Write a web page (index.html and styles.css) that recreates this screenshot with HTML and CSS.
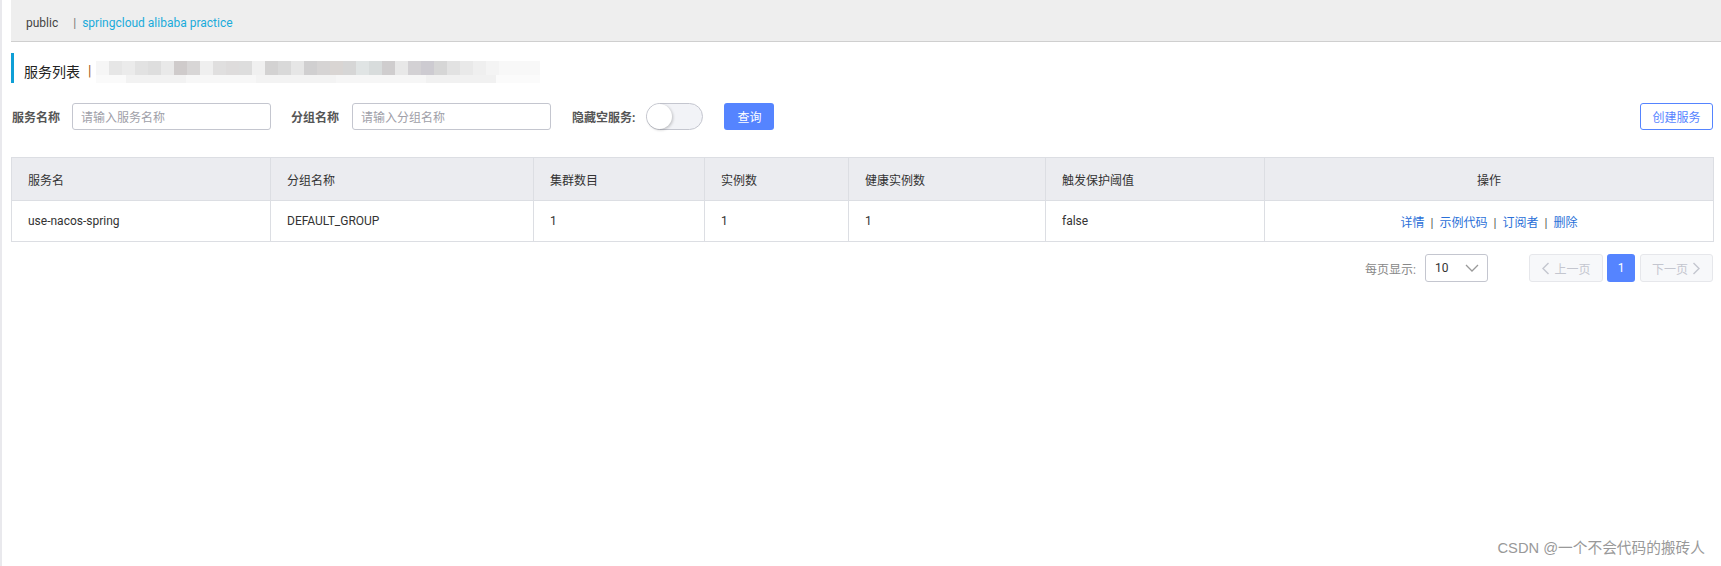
FILE: index.html
```html
<!DOCTYPE html>
<html lang="zh-CN">
<head>
<meta charset="utf-8">
<title>服务列表</title>
<link rel="stylesheet" href="styles.css">
</head>
<body>
<div class="page">
  <div class="topbar">
    <span class="ns">public</span>
    <span class="ns-sep">|</span>
    <span class="ns-link">springcloud alibaba practice</span>
  </div>
  <div class="main">
    <div class="title">
      <span class="title-text">服务列表</span>
      <span class="title-sep">|</span>
      <div class="mosaic"><div class="mosaic-top"></div><div class="mosaic-bottom"></div></div>
    </div>

    <div class="filters">
      <label class="flabel l1">服务名称</label>
      <div class="input i1">请输入服务名称</div>
      <label class="flabel l2">分组名称</label>
      <div class="input i2">请输入分组名称</div>
      <label class="flabel l3">隐藏空服务:</label>
      <div class="switch"><span class="knob"></span></div>
      <button class="btn-primary">查询</button>
      <div class="spacer"></div>
      <button class="btn-outline">创建服务</button>
    </div>

    <table class="grid">
      <colgroup>
        <col class="c1"><col class="c2"><col class="c3"><col class="c4"><col class="c5"><col class="c6"><col class="c7">
      </colgroup>
      <thead>
        <tr>
          <th>服务名</th>
          <th>分组名称</th>
          <th>集群数目</th>
          <th>实例数</th>
          <th>健康实例数</th>
          <th>触发保护阈值</th>
          <th class="center">操作</th>
        </tr>
      </thead>
      <tbody>
        <tr>
          <td>use-nacos-spring</td>
          <td>DEFAULT_GROUP</td>
          <td>1</td>
          <td>1</td>
          <td>1</td>
          <td>false</td>
          <td class="center ops"><a>详情</a><span class="bar">|</span><a>示例代码</a><span class="bar">|</span><a>订阅者</a><span class="bar">|</span><a>删除</a></td>
        </tr>
      </tbody>
    </table>

    <div class="pager">
      <span class="pager-label">每页显示:</span>
      <div class="select"><span>10</span>
        <svg class="chev" width="14" height="8" viewBox="0 0 14 8"><path d="M1 1 L7 7 L13 1" fill="none" stroke="#999" stroke-width="1.3"/></svg>
      </div>
      <div class="pbtn prev disabled">
        <svg width="9" height="13" viewBox="0 0 9 13"><path d="M7.5 1 L2 6.5 L7.5 12" fill="none" stroke="#c4c6cf" stroke-width="1.4"/></svg>
        <span>上一页</span>
      </div>
      <div class="pbtn current">1</div>
      <div class="pbtn next disabled">
        <span>下一页</span>
        <svg width="9" height="13" viewBox="0 0 9 13"><path d="M1.5 1 L7 6.5 L1.5 12" fill="none" stroke="#c4c6cf" stroke-width="1.4"/></svg>
      </div>
    </div>
  </div>
  <div class="watermark">CSDN @一个不会代码的搬砖人</div>
</div>
</body>
</html>
```

FILE: styles.css
```css
* { box-sizing: border-box; }
html, body { margin: 0; padding: 0; background: #fff; }
body {
  font-family: Roboto, "Noto Sans CJK SC", sans-serif;
  font-size: 12px;
  color: #333;
  width: 1721px;
  height: 566px;
  overflow: hidden;
}
.page {
  position: relative;
  height: 566px;
  border-left: 2px solid #e9e9ed;
  padding-left: 9px;
}
.topbar {
  height: 42px;
  background: #eeeeee;
  border-bottom: 1px solid #cfcfcf;
  display: flex;
  align-items: center;
  padding-left: 15px;
  padding-top: 4px;
  font-size: 12px;
}
.ns { color: #444; }
.ns-sep { color: #777; margin-left: 15px; margin-right: 6px; }
.ns-link { color: #1aabdb; }

.main { padding-right: 8px; }

.title {
  margin-top: 11px;
  height: 30px;
  border-left: 3px solid #0f9fd6;
  display: flex;
  align-items: center;
  padding-left: 10px;
  padding-top: 5px;
}
.title-text { font-size: 14px; color: #222; }
.title-sep { color: #a8601c; margin-left: 8px; font-size: 14px; }
.mosaic {
  position: relative;
  margin-left: 5px;
  width: 444px;
  height: 22px;
  margin-top: 3px;
}
.mosaic-top {
  height: 14px;
  background: linear-gradient(90deg,
    #f6f6f6 0 13px, #e6e6e6 13px 26px, #ebebeb 26px 39px, #e2e2e2 39px 52px,
    #dedede 52px 65px, #e9e9e9 65px 78px, #cfcbcb 78px 91px, #d8d6d6 91px 104px,
    #efefef 104px 117px, #e0dfdf 117px 130px, #dedcdc 130px 143px, #dddddd 143px 156px,
    #f0f0f0 156px 169px, #d3d2d2 169px 182px, #d9d9d9 182px 195px, #e6e6e6 195px 208px,
    #d0cfd0 208px 221px, #d6d4d4 221px 234px, #d9d5d3 234px 247px, #d6d6d6 247px 260px,
    #e0e4e4 260px 273px, #d8dcdc 273px 286px, #cfcdce 286px 299px, #e8e8e8 299px 312px,
    #d3d1d4 312px 325px, #cdcbd1 325px 338px, #d6d6d6 338px 351px, #e2e2e2 351px 364px,
    #e9e9e9 364px 377px, #efefef 377px 390px, #f4f4f4 390px 403px, #f8f8f8 403px 444px);
}
.mosaic-bottom {
  height: 8px;
  background: linear-gradient(90deg,
    #fafafa 0 30px, #f2f2f2 30px 90px, #f7f7f7 90px 160px, #f3f3f3 160px 240px,
    #f6f6f6 240px 330px, #f1f1f1 330px 400px, #fbfbfb 400px 444px);
}

.filters {
  margin-top: 20px;
  height: 27px;
  display: flex;
  align-items: center;
}
.flabel { font-weight: bold; color: #555; font-size: 12px; white-space: nowrap; }
.l1 { margin-left: 1px; margin-right: 12px; }
.l2 { margin-left: 20px; margin-right: 13px; }
.l3 { margin-left: 21px; margin-right: 11px; }
.input {
  width: 199px;
  height: 27px;
  border: 1px solid #c4c6cf;
  border-radius: 3px;
  color: #a0a0a8;
  display: flex;
  align-items: center;
  padding-left: 8px;
  font-size: 12px;
}
.switch {
  position: relative;
  width: 57px;
  height: 27px;
  border-radius: 14px;
  background: #f2f3f7;
  border: 1px solid #c4c6cf;
}
.knob {
  position: absolute;
  left: 0;
  top: 0;
  width: 25px;
  height: 25px;
  border-radius: 50%;
  background: #fff;
  box-shadow: 1px 1px 3px rgba(0,0,0,0.22);
}
.btn-primary {
  margin-left: 21px;
  width: 50px;
  height: 27px;
  border: none;
  border-radius: 3px;
  background: #5584ff;
  color: #fff;
  font-family: inherit;
  font-size: 12px;
  padding: 0;
}
.spacer { flex: 1; }
.btn-outline {
  width: 73px;
  height: 27px;
  border: 1px solid #5584ff;
  border-radius: 3px;
  background: #fff;
  color: #5584ff;
  font-family: inherit;
  font-size: 12px;
  padding: 0;
}

.grid {
  margin-top: 27px;
  width: 1702px;
  border-collapse: collapse;
  table-layout: fixed;
  font-size: 12px;
}
.c1 { width: 259px; }
.c2 { width: 263px; }
.c3 { width: 171px; }
.c4 { width: 144px; }
.c5 { width: 197px; }
.c6 { width: 219px; }
.c7 { width: 449px; }
.grid th, .grid td {
  border: 1px solid #dcdee3;
  text-align: left;
  padding: 0 16px;
  font-weight: normal;
  color: #333;
}
.grid th { background: #ebecf0; height: 43px; }
.grid td { height: 41px; }
.grid .center { text-align: center; }
.ops a { color: #2a70d8; }
.ops .bar { color: #555; margin: 0 6px; }

.pager {
  margin-top: 12px;
  height: 28px;
  display: flex;
  align-items: center;
  justify-content: flex-end;
}
.pager-label { color: #888; font-size: 12px; margin-right: 9px; }
.select {
  width: 63px;
  height: 28px;
  border: 1px solid #c4c6cf;
  border-radius: 3px;
  display: flex;
  align-items: center;
  justify-content: space-between;
  padding: 0 8px 0 9px;
  color: #333;
}
.pbtn {
  height: 28px;
  border-radius: 3px;
  display: flex;
  align-items: center;
  justify-content: center;
  gap: 4px;
  font-size: 12px;
}
.pbtn.disabled {
  background: #f7f8fa;
  border: 1px solid #e6e7eb;
  color: #c4c6cf;
}
.prev { width: 74px; margin-left: 41px; }
.current { width: 28px; margin-left: 4px; background: #5584ff; color: #fff; }
.next { width: 73px; margin-left: 5px; }

.watermark {
  position: absolute;
  right: 16px;
  bottom: 9px;
  font-family: "Liberation Sans", "Noto Sans CJK SC", sans-serif;
  font-size: 14.7px;
  color: #999;
  text-shadow: 0 0 1px #fff;
}
```
